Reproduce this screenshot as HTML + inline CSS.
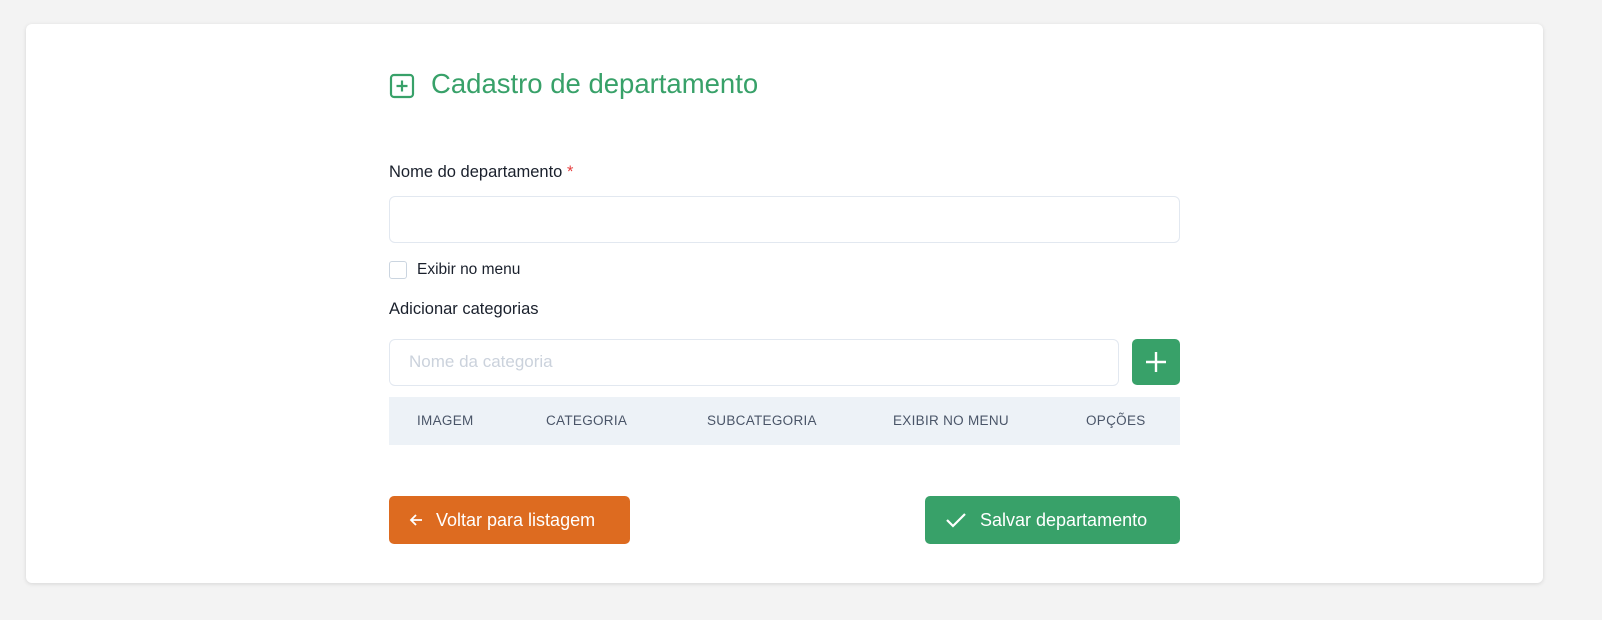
<!DOCTYPE html>
<html><head><style>
*{box-sizing:border-box;margin:0;padding:0}
body{width:1602px;height:620px;background:#f3f3f3;font-family:"Liberation Sans",sans-serif;position:relative;overflow:hidden}
.card{position:absolute;left:26px;top:24px;width:1517px;height:559px;background:#fff;border-radius:6px;box-shadow:0 1px 4px rgba(0,0,0,.12)}
.abs{position:absolute}
.title{left:431px;top:68px;font-size:27.5px;color:#38a169}
.lbl{font-size:16.5px;color:#1a202c}
.input{border:1px solid #e2e8f0;border-radius:6px;background:#fff}
.hdr{left:389px;top:397px;width:791px;height:48px;background:#edf2f7;font-size:13.5px;color:#4a5568;letter-spacing:.3px}
.hdr span{position:absolute;top:16px}
.btn{border-radius:5px;color:#fff;font-size:18px;display:flex;align-items:center}
</style></head><body>
<div class="card"></div>
<svg class="abs" style="left:389px;top:73px" width="26" height="26" viewBox="0 0 26 26"><rect x="2" y="2" width="22" height="22" rx="3" fill="none" stroke="#38a169" stroke-width="2.2"/><path d="M13 7.5v11M7.5 13h11" stroke="#38a169" stroke-width="2.2"/></svg>
<div class="abs title">Cadastro de departamento</div>
<div class="abs lbl" style="left:389px;top:163px">Nome do departamento <span style="color:#e53e3e">*</span></div>
<div class="abs input" style="left:389px;top:196px;width:791px;height:47px"></div>
<div class="abs" style="left:389px;top:261px;width:18px;height:18px;border:1px solid #cbd5e0;border-radius:3px"></div>
<div class="abs" style="left:417px;top:261px;font-size:15.5px;color:#1a202c">Exibir no menu</div>
<div class="abs lbl" style="left:389px;top:300px">Adicionar categorias</div>
<div class="abs input" style="left:389px;top:339px;width:730px;height:47px"></div>
<div class="abs" style="left:409px;top:352px;font-size:17px;color:#cbd2dc">Nome da categoria</div>
<div class="abs" style="left:1132px;top:339px;width:48px;height:46px;background:#38a169;border-radius:5px"><svg width="48" height="46"><path d="M24 13v20M14 23h20" stroke="#fff" stroke-width="2.4"/></svg></div>
<div class="abs hdr"><span style="left:28px">IMAGEM</span><span style="left:157px">CATEGORIA</span><span style="left:318px">SUBCATEGORIA</span><span style="left:504px">EXIBIR NO MENU</span><span style="left:697px">OPÇÕES</span></div>
<div class="abs btn" style="left:389px;top:496px;width:241px;height:48px;background:#dd6b20;padding-left:20px"><svg width="14" height="14" style="margin-right:13px"><path d="M13 7H2M7 2L2 7l5 5" fill="none" stroke="#fff" stroke-width="1.8"/></svg>Voltar para listagem</div>
<div class="abs btn" style="left:925px;top:496px;width:255px;height:48px;background:#38a169;padding-left:20px"><svg width="22" height="18" style="margin-right:13px"><path d="M2 9l6 6L20 3" fill="none" stroke="#fff" stroke-width="2.2"/></svg>Salvar departamento</div>
</body></html>
